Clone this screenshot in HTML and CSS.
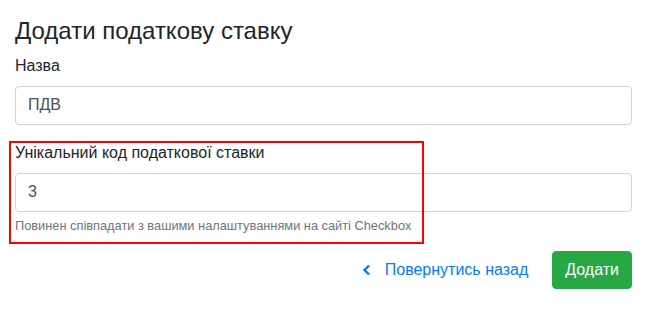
FILE: index.html
```html
<!DOCTYPE html>
<html lang="uk">
<head>
<meta charset="utf-8">
<link rel="stylesheet" href="styles.css">
</head>
<body>
<div class="page">
  <h3 class="title">Додати податкову ставку</h3>
  <div class="group">
    <label class="label">Назва</label>
    <div class="input">ПДВ</div>
  </div>
  <div class="group highlighted">
    <label class="label">Унікальний код податкової ставки</label>
    <div class="input">3</div>
    <small class="help">Повинен співпадати з вашими налаштуваннями на сайті Checkbox</small>
  </div>
  <div class="actions">
    <a class="back">
      <svg width="9" height="12" viewBox="0 0 9 12"><path d="M7 1.5 L2.5 6 L7 10.5" fill="none" stroke="#007bff" stroke-width="2.4"/></svg>
      <span>Повернутись назад</span>
    </a>
    <button class="btn">Додати</button>
  </div>
</div>
</body>
</html>
```
FILE: styles.css
```css
* { box-sizing: border-box; }
body {
  margin: 0;
  font-family: "Liberation Sans", Arial, sans-serif;
  color: #212529;
  background: #fff;
  font-size: 16px;
  line-height: 1.5;
}
.page {
  padding: 17px 14px 0 15px;
}
.title {
  margin: 0 0 8px 0;
  font-size: 24px;
  font-weight: 400;
  line-height: 1.2;
}
.group {
  margin-bottom: 16px;
}
.label {
  display: block;
  margin-bottom: 8px;
  font-size: 16px;
}
.input {
  height: 39px;
  border: 1px solid #ced4da;
  border-radius: 4px;
  padding: 6px 12px;
  font-size: 16px;
  line-height: 1.5;
  color: #495057;
}
.highlighted {
  position: relative;
}
.highlighted::after {
  content: "";
  position: absolute;
  left: -6px;
  top: 0;
  width: 411px;
  height: 99px;
  border: 2px solid #ff0000;
  pointer-events: none;
}
.help {
  display: block;
  margin-top: 4px;
  font-size: 12.8px;
  line-height: 1.5;
  color: #6c757d;
}
.actions {
  display: flex;
  justify-content: flex-end;
  align-items: center;
  gap: 24px;
}
.back {
  display: flex;
  align-items: center;
  gap: 14px;
  color: #007bff;
  font-size: 16px;
}
.btn {
  height: 38px;
  padding: 0 12px;
  border: 1px solid #28a745;
  background: #28a745;
  color: #fff;
  border-radius: 4px;
  font-family: inherit;
  font-size: 16px;
}
```
